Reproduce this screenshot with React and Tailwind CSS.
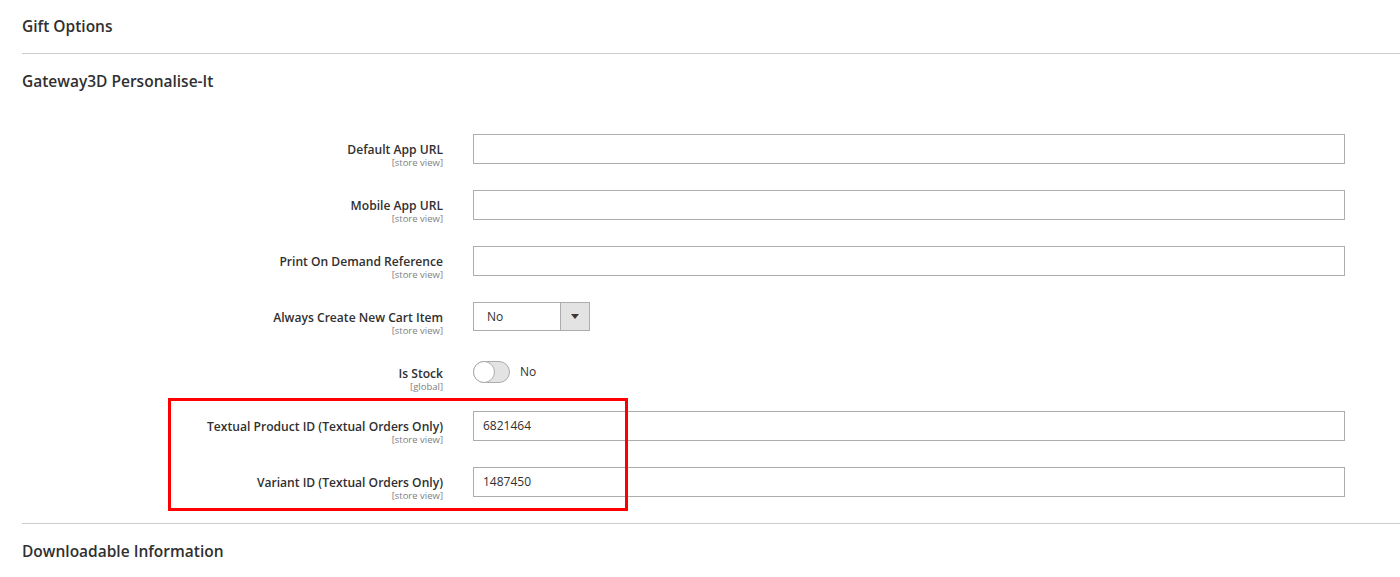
const font = { fontFamily: '"Open Sans", "Noto Sans", sans-serif' };

function Label({ title, scope }) {
  return (
    <div className="w-[421px] shrink-0 text-right pt-[9px]">
      <div className="text-[12.1px] leading-[14px] font-semibold text-[#303030]">{title}</div>
      <div className="text-[9.5px] leading-[11px] text-[#808080]">[{scope}]</div>
    </div>
  );
}

function TextRow({ title, scope = "store view", value = "" }) {
  return (
    <div className="flex gap-[30px] pr-[55px] h-[30px]">
      <Label title={title} scope={scope} />
      <div className="flex-1 h-[30px] border border-[#adadad] bg-white px-[9px] flex items-center text-[12px] text-[#303030]">
        {value}
      </div>
    </div>
  );
}

export default function App() {
  return (
    <div style={font} className="bg-white w-[1400px] h-[577px] overflow-hidden relative">
      <div className="pl-[22px]">
        <div className="h-[54px] flex items-center border-b border-[#cccccc]">
          <h2 className="text-[15.5px] font-semibold text-[#303030]">Gift Options</h2>
        </div>
        <div className="h-[56px] flex items-center">
          <h2 className="text-[15.5px] font-semibold text-[#303030]">Gateway3D Personalise-It</h2>
        </div>
        <div className="pt-[24px] flex flex-col gap-[26px]">
          <TextRow title="Default App URL" />
          <TextRow title="Mobile App URL" />
          <TextRow title="Print On Demand Reference" />
          <div className="flex gap-[30px] h-[30px]">
            <Label title="Always Create New Cart Item" scope="store view" />
            <div className="w-[117px] h-[29px] border border-[#adadad] flex text-[12px] text-[#303030]">
              <div className="flex-1 flex items-center pl-[13px]">No</div>
              <div className="w-[29px] border-l border-[#adadad] bg-[#e3e3e3] flex items-center justify-center">
                <svg width="8" height="5" viewBox="0 0 8 5"><path d="M0 0h8L4 5z" fill="#41362f" /></svg>
              </div>
            </div>
          </div>
          <div className="flex gap-[30px] h-[27px]">
            <Label title="Is Stock" scope="global" />
            <div className="flex items-start gap-[10px] pt-[3px]">
              <div className="w-[37px] h-[22px] rounded-full bg-[#e3e3e3] border border-[#adadad] relative">
                <div className="absolute -left-px -top-px w-[22px] h-[22px] rounded-full bg-white border border-[#adadad]" />
              </div>
              <span className="text-[12px] leading-[22px] text-[#303030]">No</span>
            </div>
          </div>
          <TextRow title="Textual Product ID (Textual Orders Only)" value="6821464" />
          <TextRow title="Variant ID (Textual Orders Only)" value="1487450" />
        </div>
        <div className="mt-[26px] border-t border-[#cccccc] h-[56px] flex items-center">
          <h2 className="text-[15.5px] font-semibold text-[#303030]">Downloadable Information</h2>
        </div>
      </div>
      <div className="absolute left-[168px] top-[398px] w-[460px] h-[113px] border-[3px] border-[#ff0000]" />
    </div>
  );
}
